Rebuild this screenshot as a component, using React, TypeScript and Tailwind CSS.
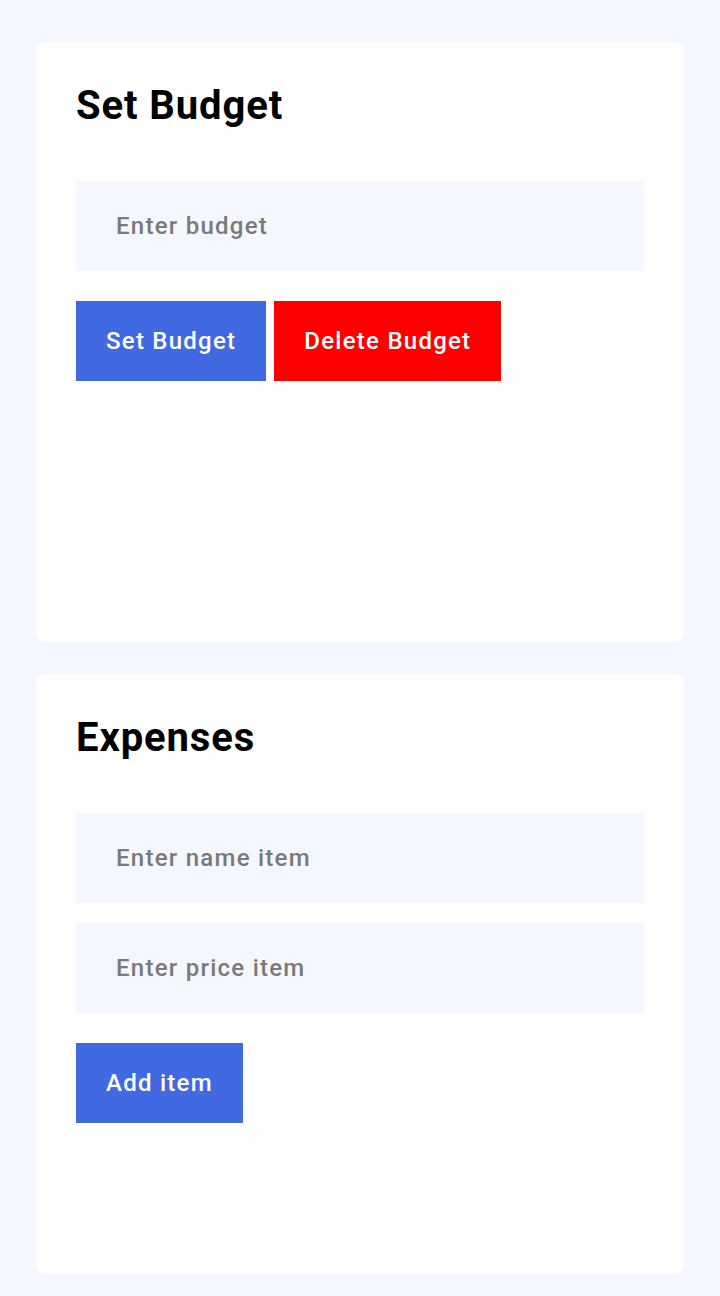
import { useState } from "react";

function Card({ title, children }: { title: string; children: React.ReactNode }) {
  return (
    <div className="bg-white rounded-[10px] h-[600px] px-[40px] pt-[40px]">
      <h2 className="text-[40px] leading-[48px] font-bold text-black tracking-[0.9px]">{title}</h2>
      <div className="mt-[51px]">{children}</div>
    </div>
  );
}

const inputCls =
  "block w-full h-[90px] bg-[#f4f7fe] px-[40px] text-[24px] font-medium tracking-[1.25px] text-black placeholder:text-[#7a7a7a] outline-none";
const btnCls = "h-[80px] px-[30px] text-white text-[24px] font-medium tracking-[1.25px]";

export default function App() {
  const [budget, setBudget] = useState("");
  const [name, setName] = useState("");
  const [price, setPrice] = useState("");

  return (
    <div
      className="min-h-[1296px] bg-[#f4f7fe] px-[36px] pt-[42px] pb-[22px] flex flex-col gap-[32px]"
      style={{ fontFamily: "Roboto, 'Noto Sans', sans-serif" }}
    >
      {/* Budget */}
      <Card title="Set Budget">
        <input
          type="number"
          value={budget}
          onChange={(e) => setBudget(e.target.value)}
          placeholder="Enter budget"
          className={inputCls}
        />
        <div className="flex gap-[8px] mt-[30px]">
          <button className={`${btnCls} bg-[#4169e1]`}>Set Budget</button>
          <button className={`${btnCls} bg-[#ff0000]`}>Delete Budget</button>
        </div>
      </Card>

      {/* Expenses */}
      <Card title="Expenses">
        <div className="flex flex-col gap-[20px]">
          <input
            type="text"
            value={name}
            onChange={(e) => setName(e.target.value)}
            placeholder="Enter name item"
            className={inputCls}
          />
          <input
            type="number"
            value={price}
            onChange={(e) => setPrice(e.target.value)}
            placeholder="Enter price item"
            className={inputCls}
          />
        </div>
        <div className="flex mt-[30px]">
          <button className={`${btnCls} bg-[#4169e1]`}>Add item</button>
        </div>
      </Card>
    </div>
  );
}
